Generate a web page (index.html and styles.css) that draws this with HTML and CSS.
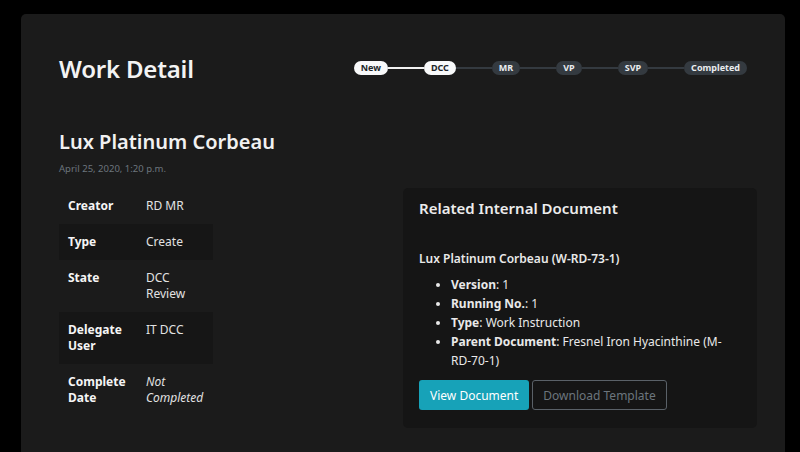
FILE: index.html
```html
<!DOCTYPE html>
<html>
<head>
<meta charset="utf-8">
<link rel="stylesheet" href="styles.css">
</head>
<body>
<div class="card">
  <div class="head">
    <h1 class="title">Work Detail</h1>
    <div class="stepper">
      <span class="pill done">New</span>
      <span class="link done"></span>
      <span class="pill done">DCC</span>
      <span class="link"></span>
      <span class="pill">MR</span>
      <span class="link"></span>
      <span class="pill">VP</span>
      <span class="link"></span>
      <span class="pill">SVP</span>
      <span class="link"></span>
      <span class="pill">Completed</span>
    </div>
  </div>
  <h2 class="name">Lux Platinum Corbeau</h2>
  <div class="date">April 25, 2020, 1:20 p.m.</div>
  <div class="body">
    <table class="info">
      <tr><th>Creator</th><td>RD MR</td></tr>
      <tr class="odd"><th>Type</th><td>Create</td></tr>
      <tr><th>State</th><td>DCC Review</td></tr>
      <tr class="odd"><th>Delegate User</th><td>IT DCC</td></tr>
      <tr><th>Complete Date</th><td><em>Not Completed</em></td></tr>
    </table>
    <div class="doc">
      <h3 class="doc-title">Related Internal Document</h3>
      <div class="doc-name">Lux Platinum Corbeau (W-RD-73-1)</div>
      <ul class="props">
        <li><b>Version</b>: 1</li>
        <li><b>Running No.</b>: 1</li>
        <li><b>Type</b>: Work Instruction</li>
        <li><b>Parent Document</b>: Fresnel Iron Hyacinthine (M-RD-70-1)</li>
      </ul>
      <div class="actions">
        <button class="btn primary">View Document</button>
        <button class="btn outline">Download Template</button>
      </div>
    </div>
  </div>
</div>
</body>
</html>
```
FILE: styles.css
```css
* { box-sizing: border-box; }
html, body { margin: 0; padding: 0; }
body {
  background: #000;
  font-family: "Noto Sans", "Open Sans", sans-serif;
  color: #e9e9e9;
  padding: 14px 15px 0 21px;
  height: 452px;
  overflow: hidden;
}
.card {
  background: #1b1b1b;
  border-radius: 5px;
  width: 764px;
  height: 460px;
  padding: 40px 28px 0 38px;
}
.head {
  display: flex;
  align-items: center;
  justify-content: space-between;
  padding-right: 10px;
  height: 28px;
}
.title {
  margin: 0;
  font-size: 24px;
  font-weight: 600;
  color: #f3f3f3;
  letter-spacing: -0.2px;
}
.stepper {
  display: flex;
  align-items: center;
}
.pill {
  display: inline-block;
  height: 14px;
  line-height: 14px;
  padding: 0 7px;
  border-radius: 7px;
  background: #343a40;
  color: #e9ecef;
  font-size: 9px;
  font-weight: 700;
}
.pill.done { background: #f8f9fa; color: #212529; }
.link { width: 36px; height: 2px; background: #343a40; }
.link.done { background: #f1f1f1; }
.name {
  margin: 47px 0 0;
  font-size: 20px;
  font-weight: 600;
  line-height: 26px;
  color: #f1f1f1;
}
.date {
  margin-top: 7px;
  font-size: 9.5px;
  color: #6c757d;
  line-height: 14px;
}
.body {
  margin-top: 12px;
  display: grid;
  grid-template-columns: 1fr 354px;
}
.info {
  border-collapse: collapse;
  width: 154px;
  align-self: start;
  font-size: 12px;
}
.info th, .info td {
  text-align: left;
  vertical-align: top;
  padding: 10px 9px;
  line-height: 16px;
}
.info th { font-weight: 700; width: 78px; color: #f5f5f5; }
.info td { color: #e2e2e2; }
.info tr.odd { background: #161616; }
.info em { font-style: italic; }
.doc {
  background: #151515;
  border-radius: 5px;
  padding: 10px 16px 18px;
}
.doc-title {
  margin: 0;
  font-size: 15px;
  font-weight: 600;
  line-height: 20px;
  color: #ececec;
}
.doc-name {
  margin-top: 33px;
  font-size: 12px;
  font-weight: 600;
  line-height: 16px;
}
.props {
  margin: 8px 0 10px;
  padding-left: 32px;
  font-size: 12px;
  line-height: 19px;
}
.props b { font-weight: 700; }
.actions { display: flex; gap: 3px; }
.btn {
  font-family: inherit;
  font-size: 12px;
  height: 30px;
  padding: 0 10px;
  border-radius: 3px;
  border: 1px solid transparent;
}
.btn.primary { background: #17a2b8; color: #fff; }
.btn.outline { background: transparent; border-color: #5a6168; color: #6c757d; }
```
